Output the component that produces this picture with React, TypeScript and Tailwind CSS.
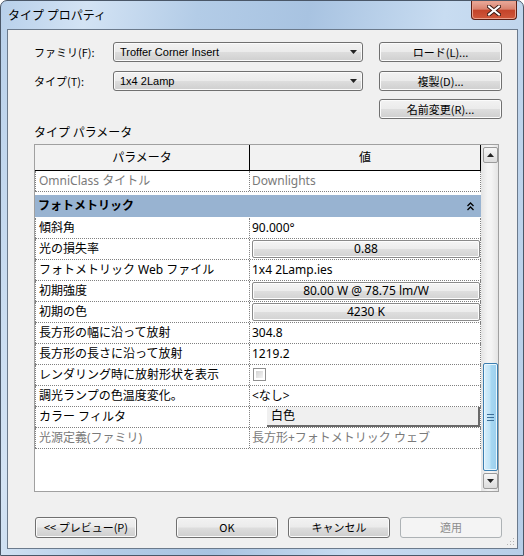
import React from "react";

const grad =
    "rounded-[3px] border border-[#707070] bg-[linear-gradient(to_bottom,#f2f2f2_0%,#ebebeb_48%,#dddddd_52%,#cfcfcf_100%)] shadow-[inset_0_0_0_1px_#fbfbfb] text-[11px] text-black";

const btn = `flex items-center justify-center ${grad}`;

const cellBtn =
    "flex h-[18px] w-[228px] items-center justify-center rounded-[2px] border border-[#8a8a8a] bg-[linear-gradient(to_bottom,#f5f5f5_0%,#ececec_50%,#dedede_52%,#d2d2d2_100%)] shadow-[inset_0_0_0_1px_#fdfdfd]";

type Row = {
    name: string;
    value?: string;
    kind?: "text" | "button" | "check" | "color" | "gray";
};

const rows: Row[] = [
    {name: "傾斜角", value: "90.000°"},
    {name: "光の損失率", value: "0.88", kind: "button"},
    {name: "フォトメトリック Web ファイル", value: "1x4 2Lamp.ies"},
    {name: "初期強度", value: "80.00 W @ 78.75 lm/W", kind: "button"},
    {name: "初期の色", value: "4230 K", kind: "button"},
    {name: "長方形の幅に沿って放射", value: "304.8"},
    {name: "長方形の長さに沿って放射", value: "1219.2"},
    {name: "レンダリング時に放射形状を表示", kind: "check"},
    {name: "調光ランプの色温度変化。", value: "<なし>"},
    {name: "カラー フィルタ", value: "白色", kind: "color"},
    {name: "光源定義(ファミリ)", value: "長方形+フォトメトリック ウェブ", kind: "gray"},
];

const Arrow = ({up}: {up?: boolean}) => (
    <svg width="7" height="4" viewBox="0 0 7 4">
        <path d={up ? "M0 4 L3.5 0 L7 4 Z" : "M0 0 L7 0 L3.5 4 Z"} fill="#222" />
    </svg>
);

const Combo = ({text}: {text: string}) => (
    <div className={`flex w-[250px] h-[20px] items-center justify-between pl-[6px] pr-[5px] ${grad} font-['Liberation_Sans','Noto_Sans_CJK_JP',sans-serif]`}>
        <span>{text}</span>
        <Arrow />
    </div>
);

const ValueCell = ({row}: {row: Row}) => {
    const kind = row.kind ?? "text";
    if (kind === "button") {
        return (
            <div className="flex h-full items-center pl-[2px]">
                <div className={cellBtn}>{row.value}</div>
            </div>
        );
    }
    if (kind === "check") {
        return (
            <div className="flex h-full items-start pl-[3px] pt-[3px]">
                <div className="h-[13px] w-[13px] border border-[#8f8f8f] bg-white p-[2px]">
                    <div className="h-full w-full bg-[linear-gradient(135deg,#d4d4d4,#f4f4f4)]" />
                </div>
            </div>
        );
    }
    if (kind === "color") {
        return (
            <div className="flex h-full pl-[17px]">
                <div className="flex h-full w-[213px] items-center border-b-2 border-r-2 border-[#6a6a6a] bg-[#f0f0f0] pl-[4px]">
                    {row.value}
                </div>
            </div>
        );
    }
    return (
        <div className={`flex h-full items-center pl-[2px] ${kind === "gray" ? "text-[#7a7a7a]" : ""}`}>
            {row.value}
        </div>
    );
};

const DataRow = ({row}: {row: Row}) => (
    <div className="flex h-[21px] border-b border-dotted border-[#808080]">
        <div className={`flex w-[214px] items-center pl-[3px] border-l border-dotted border-[#808080] ${row.kind === "gray" ? "text-[#7a7a7a]" : ""}`}>
            {row.name}
        </div>
        <div className="flex-1 border-x border-dotted border-[#808080]">
            <ValueCell row={row} />
        </div>
    </div>
);

const Scrollbar = () => (
    <div className="flex w-[17px] flex-col pl-[2px] pt-[2px] pb-[2px] bg-[linear-gradient(to_right,#e4e4e4,#f4f4f4_40%,#f4f4f4_60%,#e4e4e4)]">
        <div className="flex h-[16px] w-[15px] items-center justify-center rounded-[2px] border border-[#9a9a9a] bg-[linear-gradient(to_bottom,#f6f6f6,#dcdcdc)]">
            <Arrow up />
        </div>
        <div className="flex-1" />
        <div className="flex h-[108px] w-[15px] items-center justify-center rounded-[2px] border border-[#3c7fb1] bg-[linear-gradient(to_right,#d9effb,#bfe4f8_45%,#a6d7f2_55%,#9ccfee)] shadow-[inset_0_0_0_1px_#e9f6fd]">
            <svg width="7" height="7" viewBox="0 0 7 7">
                <path d="M0 0.5H7M0 3.5H7M0 6.5H7" stroke="#3d6e97" strokeWidth="1" />
            </svg>
        </div>
        <div className="mt-[2px] flex h-[16px] w-[15px] items-center justify-center rounded-[2px] border border-[#9a9a9a] bg-[linear-gradient(to_bottom,#f6f6f6,#dcdcdc)]">
            <Arrow />
        </div>
    </div>
);

const App: React.FC = () => {
    return (
        <div className="flex h-[556px] w-[524px] flex-col overflow-hidden rounded-t-[7px] border border-[#4a5768] bg-[linear-gradient(100deg,#b8d0ea_0%,#d3e3f4_14%,#b3cce7_32%,#a8c3e1_50%,#c8dcf1_72%,#b7cee8_100%)] font-['Noto_Sans','Noto_Sans_CJK_JP',sans-serif] text-[12px] text-black">
            {/* title bar */}
            <div className="flex h-[28px] items-start justify-between pl-[7px] pr-[6px]">
                <span className="mt-[5px] text-[12px] font-['Noto_Sans_CJK_JP',sans-serif]">タイプ プロパティ</span>
                <div className="flex h-[19px] w-[46px] items-center justify-center rounded-b-[4px] border border-t-0 border-[#5b1f15] bg-[linear-gradient(to_bottom,#e9ab9c_0%,#d9826e_45%,#c4442a_52%,#d0583c_100%)] shadow-[inset_0_0_0_1px_#eaa08c]">
                    <svg width="14" height="11" viewBox="0 0 14 11">
                        <path d="M2 1.5 L12 9.5 M12 1.5 L2 9.5" stroke="#3a1a14" strokeWidth="4" strokeLinecap="square" />
                        <path d="M2 1.5 L12 9.5 M12 1.5 L2 9.5" stroke="#ffffff" strokeWidth="2" strokeLinecap="square" />
                    </svg>
                </div>
            </div>

            {/* client area */}
            <div className="relative mb-[6px] ml-[6px] mr-[5px] flex flex-1 flex-col border border-[#6b7a8c] bg-[#f0f0f0]">
                <div className="flex flex-col pl-[26px] pt-[12px] font-['Noto_Sans_CJK_JP',sans-serif] text-[11px]">
                    <div className="flex h-[20px] items-center">
                        <span className="w-[79px]">ファミリ(F):</span>
                        <Combo text="Troffer Corner Insert" />
                        <button className={`${btn} ml-[16px] h-[20px] w-[123px]`}>ロード(L)...</button>
                    </div>
                    <div className="mt-[9px] flex h-[20px] items-center">
                        <span className="w-[79px]">タイプ(T):</span>
                        <Combo text="1x4 2Lamp" />
                        <button className={`${btn} ml-[16px] h-[20px] w-[123px]`}>複製(D)...</button>
                    </div>
                    <div className="mt-[8px] flex h-[20px] items-center">
                        <div className="w-[345px]" />
                        <button className={`${btn} h-[20px] w-[123px]`}>名前変更(R)...</button>
                    </div>
                    <div className="flex h-[25px] items-center text-[12px]">タイプ パラメータ</div>
                </div>

                {/* parameter grid */}
                <div className="ml-[26px] flex h-[348px] w-[465px] border border-[#a0a0a0] bg-white">
                    <div className="flex w-[446px] flex-col">
                        <div className="flex h-[26px] border-b border-black bg-[#f2f2f2]">
                            <div className="flex w-[214px] items-center justify-center">パラメータ</div>
                            <div className="flex flex-1 items-center justify-center border-x border-black">値</div>
                        </div>
                        <div className="flex h-[21px] border-b border-dotted border-[#808080] text-[#7a7a7a]">
                            <div className="flex w-[214px] items-center pl-[3px] border-l border-dotted border-[#808080]">OmniClass タイトル</div>
                            <div className="flex flex-1 items-center pl-[2px] border-x border-dotted border-[#808080]">Downlights</div>
                        </div>
                        <div className="h-[3px]" />
                        <div className="flex h-[22px] items-center justify-between bg-[#98b3d1] pl-[3px] pr-[7px] font-bold">
                            <span>フォトメトリック</span>
                            <svg width="7" height="9" viewBox="0 0 7 9">
                                <path d="M0.5 4 L3.5 1 L6.5 4 M0.5 8 L3.5 5 L6.5 8" stroke="#000" strokeWidth="1.3" fill="none" />
                            </svg>
                        </div>
                        <div className="h-[1px]" />
                        {rows.map((r) => (
                            <DataRow key={r.name} row={r} />
                        ))}
                        <div className="flex-1" />
                    </div>
                    <Scrollbar />
                </div>

                {/* bottom buttons */}
                <div className="mt-[25px] flex h-[21px] font-['Noto_Sans_CJK_JP',sans-serif] text-[11px]">
                    <button className={`${btn} ml-[27px] w-[102px]`}>&lt;&lt; プレビュー(P)</button>
                    <button className={`${btn} ml-[39px] w-[102px] border-[#3c7fb1] shadow-[inset_0_0_0_1px_#5cc8f6]`}>OK</button>
                    <button className={`${btn} ml-[10px] w-[102px]`}>キャンセル</button>
                    <button className="ml-[10px] flex w-[102px] items-center justify-center rounded-[3px] border border-[#adb2b5] bg-[#f4f4f4] text-[#8d8d8d]">適用</button>
                </div>

                <svg className="absolute bottom-[2px] right-[2px]" width="10" height="10" viewBox="0 0 10 10">
                    <g fill="#b5b5b5">
                        <rect x="8" y="2" width="1" height="1" />
                        <rect x="5" y="5" width="1" height="1" />
                        <rect x="8" y="5" width="1" height="1" />
                        <rect x="2" y="8" width="1" height="1" />
                        <rect x="5" y="8" width="1" height="1" />
                        <rect x="8" y="8" width="1" height="1" />
                    </g>
                </svg>
            </div>
        </div>
    );
};

export default App;
